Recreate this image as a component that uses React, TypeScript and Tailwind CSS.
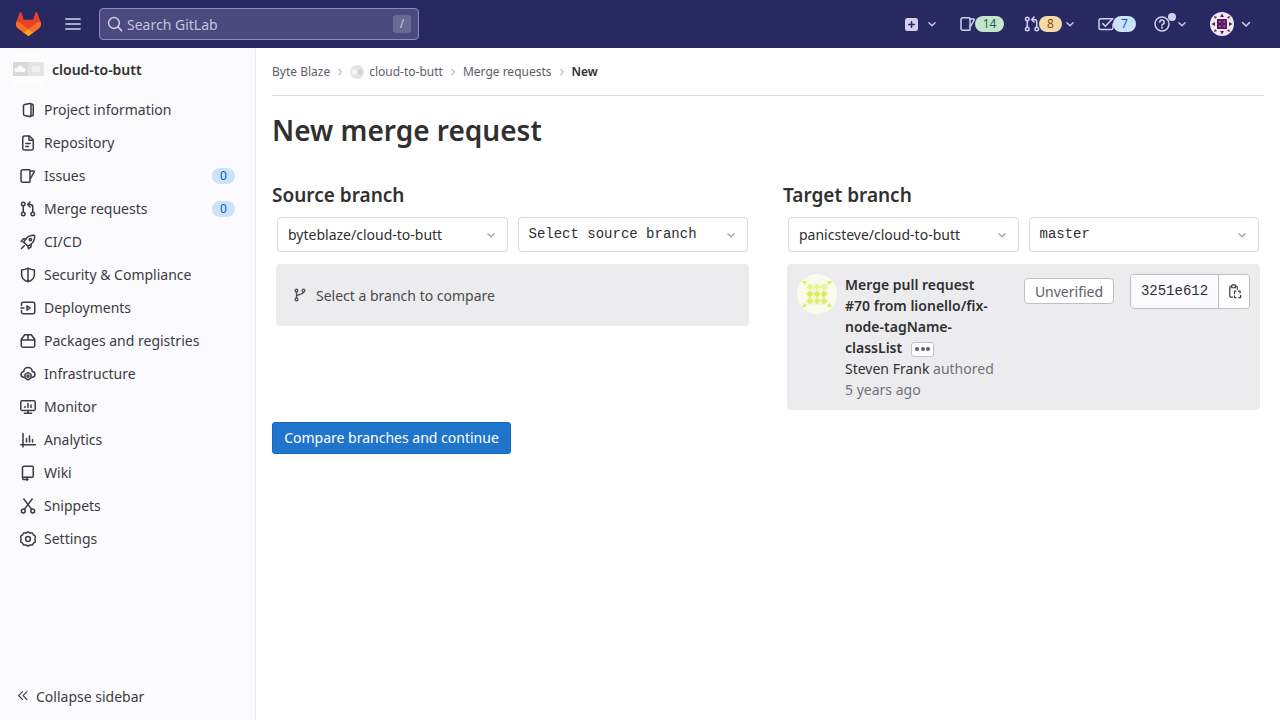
import React from "react";

const S = ({ children, className = "w-4 h-4", sw = 1.5 }: { children: React.ReactNode; className?: string; sw?: number }) => (
  <svg viewBox="0 0 16 16" fill="none" stroke="currentColor" strokeWidth={sw} strokeLinecap="round" strokeLinejoin="round" className={`shrink-0 ${className}`}>
    {children}
  </svg>
);

const Chevron = ({ className = "w-4 h-4" }: { className?: string }) => (
  <S className={className}><path d="M4.5 6.5 8 10l3.5-3.5" /></S>
);

const icons: Record<string, React.ReactNode> = {
  project: <><path d="M9.7 1.4 4.6 2.6A1.4 1.4 0 0 0 3.5 4v8a1.4 1.4 0 0 0 1.1 1.4l5.1 1.2A1 1 0 0 0 11 13.6V2.4a1 1 0 0 0-1.3-1Z" /><path d="M10.5 2H11.5A1.75 1.75 0 0 1 13.25 3.75v8.5A1.75 1.75 0 0 1 11.5 14h-1" /></>,
  doc: <><path d="M2.75 2.75A1.75 1.75 0 0 1 4.5 1H9.5L13.25 4.75v8.5A1.75 1.75 0 0 1 11.5 15h-7a1.75 1.75 0 0 1-1.75-1.75Z" /><path d="M9 1.25V5.25H13" /><path d="M5.8 8.5h4.4M5.8 11.5h2.6" /></>,
  issues: <><path d="M2.75 1.75h6.5a.75.75 0 0 1 .75.75v11a.75.75 0 0 1-.75.75h-6.5A1.75 1.75 0 0 1 1 12.5v-9A1.75 1.75 0 0 1 2.75 1.75Z" /><path d="M10.5 3h3.2a.6.6 0 0 1 .5.9L10.5 10.5" /></>,
  mr: <><circle cx="3.25" cy="3" r="1.75" /><circle cx="3.25" cy="13" r="1.75" /><circle cx="12.75" cy="13" r="1.75" /><path d="M3.25 4.75v6.5" /><path d="M12.75 11.25V6A2.5 2.5 0 0 0 10.25 3.5H8" /><path d="M10 1 7.75 3.5 10 6" /></>,
  rocket: <><path d="M14.6 1.4c-3.6-.3-6.6.9-8.6 3.4L3.7 8.1l4.2 4.2 3.3-2.3c2.5-2 3.7-5 3.4-8.6Z" /><path d="M6 4.8H3.4L1.2 7.4l2.5.7M11.2 10v2.6l-2.6 2.2-.7-2.5" /><circle cx="10.4" cy="5.6" r="1.2" /><path d="M4.3 11.7 1.5 14.5" /></>,
  shield: <path d="M8 1.2c2 1.2 4.2 1.7 6.4 1.8v4.8c0 3.2-2.5 5.8-6.4 7-3.9-1.2-6.4-3.8-6.4-7V3C3.8 2.9 6 2.4 8 1.2ZM8 1.5v13" />,
  deploy: <><path d="M1.5 5.5V4a1.75 1.75 0 0 1 1.75-1.75H13A1.75 1.75 0 0 1 14.75 4v8A1.75 1.75 0 0 1 13 13.75H3.25A1.75 1.75 0 0 1 1.5 12v-1.5" /><path d="M7 5.8 10.3 8 7 10.2Z" /><path d="M1 8h3" /></>,
  pkg: <><path d="M1.25 6.5 4.7 1.75h6.6l3.45 4.75v6A1.75 1.75 0 0 1 13 14.25H3a1.75 1.75 0 0 1-1.75-1.75Z" /><path d="M1.5 7h13M8 1.75V7" /></>,
  cloud: <><path d="M3.8 11.2A2.9 2.9 0 0 1 1 8.4 2.8 2.8 0 0 1 3.8 5.6 4.2 4.2 0 0 1 12.2 5.6 2.8 2.8 0 0 1 15 8.4a2.9 2.9 0 0 1-2.8 2.8" /><path d="M8 6.7 11 8.4v3.6L8 13.8 5 12V8.4Z" /><circle cx="8" cy="10.2" r="1" /></>,
  monitor: <><rect x=".75" y="1.75" width="14.5" height="9.75" rx="1.4" /><path d="M8 11.5V14.25M4.5 14.25h7" /><path d="M5 8.5v-1M8 8.5v-4M11 8.5V6" /></>,
  chart: <><path d="M3 1.5v13.5M.8 12.75h14.7" /><path d="M6.5 10V6.5M9.5 10V4M12.5 10V7.5" /></>,
  book: <><path d="M2.5 12.5V3A1.75 1.75 0 0 1 4.25 1.25h8c.5 0 1 .4 1 1v9c0 .5-.5 1-1 1H4A1.5 1.5 0 0 0 2.5 13.5c0 .7.6 1 1.2 1H8" /><path d="M7 12.25v3" /></>,
  snippet: <><circle cx="3.3" cy="13" r="1.9" /><circle cx="12.7" cy="13" r="1.9" /><path d="M3.8 1 11.7 11.4M12.2 1 4.3 11.4" /></>,
  gear: <><circle cx="8" cy="8" r="2.4" /><path d="M8 .9 10 2l2.3-.1 1.2 2 1.9 1.2L15 8l.4 2.9-1.9 1.2-1.2 2L10 14l-2 1.1L6 14l-2.3.1-1.2-2L.6 10.9 1 8 .6 5.1l1.9-1.2 1.2-2L6 2Z" /></>,
  todo: <><path d="M15 2.75H2.75A1.75 1.75 0 0 0 1 4.5v7.25A1.75 1.75 0 0 0 2.75 13.5h10.5A1.75 1.75 0 0 0 15 11.75V8" /><path d="m4.8 7.6 2.6 2.6L14.2 3" /></>,
  help: <><circle cx="8" cy="8" r="7" /><path d="M5.8 6.3A2.2 2.2 0 1 1 8.9 8.2c-.6.3-.9.7-.9 1.3" /><circle cx="8" cy="11.7" r=".4" /></>,
  branch: <><circle cx="4" cy="3" r="1.6" /><circle cx="4" cy="13" r="1.6" /><circle cx="12" cy="3" r="1.6" /><path d="M4 4.6v6.8M12 4.6c0 3.2-8 2.2-8 5.4" /></>,
};

const nav: [string, string, string?][] = [
  ["project", "Project information"],
  ["doc", "Repository"],
  ["issues", "Issues", "0"],
  ["mr", "Merge requests", "0"],
  ["rocket", "CI/CD"],
  ["shield", "Security & Compliance"],
  ["deploy", "Deployments"],
  ["pkg", "Packages and registries"],
  ["cloud", "Infrastructure"],
  ["monitor", "Monitor"],
  ["chart", "Analytics"],
  ["book", "Wiki"],
  ["snippet", "Snippets"],
  ["gear", "Settings"],
];

const Logo = () => (
  <svg viewBox="0 0 25 24" className="w-[25px] h-[24px] shrink-0">
    <path fill="#E24329" d="m24.507 9.5-.034-.09L21.082.562a.896.896 0 0 0-1.694.091l-2.29 7.01H7.825L5.535.653a.898.898 0 0 0-1.694-.09L.451 9.411.416 9.5a6.297 6.297 0 0 0 2.09 7.278l.012.01.03.022 5.16 3.867 2.56 1.935 1.554 1.176a1.051 1.051 0 0 0 1.268 0l1.555-1.176 2.56-1.935 5.197-3.89.014-.01A6.297 6.297 0 0 0 24.507 9.5Z" />
    <path fill="#FC6D26" d="m24.507 9.5-.034-.09a11.44 11.44 0 0 0-4.56 2.051l-7.447 5.632 4.742 3.584 5.197-3.89.014-.01A6.297 6.297 0 0 0 24.507 9.5Z" />
    <path fill="#FCA326" d="m7.707 20.677 2.56 1.935 1.555 1.176a1.051 1.051 0 0 0 1.268 0l1.555-1.176 2.56-1.935-4.743-3.584-4.755 3.584Z" />
    <path fill="#FC6D26" d="M5.01 11.461a11.43 11.43 0 0 0-4.56-2.05L.416 9.5a6.297 6.297 0 0 0 2.09 7.278l.012.01.03.022 5.16 3.867 4.745-3.584-7.444-5.632Z" />
  </svg>
);

const ProjectThumb = ({ className }: { className: string }) => (
  <svg viewBox="0 0 32 32" className={className}>
    <rect width="32" height="32" rx="4" fill="#fdfdfe" />
    <rect x="1" y="9" width="31" height="14" rx="1" fill="#e6e6e6" />
    <rect x="1" y="9" width="15" height="14" fill="#d8d8d8" />
    <path d="M4 19a2 2 0 0 1 1-4 3.5 3.5 0 0 1 6.5 0 2 2 0 0 1 .5 4Z" fill="#fafafa" />
    <rect x="19" y="12" width="10" height="8" rx="1" fill="#f0f0f0" stroke="#dcdcdc" />
  </svg>
);

const UserAvatar = () => (
  <svg viewBox="0 0 24 24" className="w-6 h-6 shrink-0">
    <circle cx="12" cy="12" r="12" fill="#f1e9ef" />
    <g fill="#5d1a66">
      <rect x="7" y="7" width="10" height="10" />
      <path d="M12 1.5 14 5h-4ZM12 22.5 10 19h4ZM1.5 12 5 10v4ZM22.5 12 19 14v-4ZM4 4l3 1-2 2ZM20 4l-1 3-2-2ZM4 20l1-3 2 2ZM20 20l-3-1 2-2Z" />
    </g>
    <g fill="#a879ab">
      <rect x="9" y="9" width="1.6" height="1.6" />
      <rect x="13.4" y="9" width="1.6" height="1.6" />
      <rect x="9" y="13.4" width="1.6" height="1.6" />
      <rect x="13.4" y="13.4" width="1.6" height="1.6" />
    </g>
  </svg>
);

const Identicon = () => (
  <svg viewBox="0 0 40 40" className="w-10 h-10 shrink-0">
    <circle cx="20" cy="20" r="20" fill="#f9fbec" />
    <rect x="9" y="9" width="22" height="22" fill="#f4f9d8" />
    <g fill="#dcec5c">
      <path d="M13 9.5l3.5 3.5-3.5 3.5L9.5 13ZM20 9.5l3.5 3.5-3.5 3.5-3.5-3.5ZM27 9.5l3.5 3.5-3.5 3.5-3.5-3.5Z" opacity=".55" />
      <path d="M13 16.5l3.5 3.5-3.5 3.5L9.5 20ZM20 16.5l3.5 3.5-3.5 3.5-3.5-3.5ZM27 16.5l3.5 3.5-3.5 3.5-3.5-3.5Z" />
      <path d="M13 23.5l3.5 3.5-3.5 3.5L9.5 27ZM20 23.5l3.5 3.5-3.5 3.5-3.5-3.5ZM27 23.5l3.5 3.5-3.5 3.5-3.5-3.5Z" opacity=".85" />
      <path d="M5 7h5L7.5 11ZM35 7h-5l2.5 4ZM5 33h5l-2.5-4ZM35 33h-5l2.5-4Z" />
    </g>
  </svg>
);

const Select = ({ children, mono = false, w }: { children: React.ReactNode; mono?: boolean; w: string }) => (
  <div className={`${w} h-[35px] flex items-center justify-between bg-white rounded border border-[#dcdcde] pr-[9px] shadow-[0_0_1px_rgba(0,0,0,.08)] text-[#303030] ${mono ? "pl-[9.5px] font-['Liberation_Mono',monospace]" : "pl-[10px]"}`}>
    <span>{children}</span>
    <span className="text-[#a4a3a8]"><Chevron className="w-[14px] h-[14px]" /></span>
  </div>
);

const Crumb = ({ className }: { className: string }) => (
  <span className={`text-[#8a8a90] ${className}`}>
    <S className="w-[10px] h-[10px]"><path d="M6 3.5 10.5 8 6 12.5" /></S>
  </span>
);

export default function App() {
  return (
    <div className="h-[720px] w-[1280px] overflow-hidden flex flex-col bg-white font-['Noto_Sans',sans-serif] text-[14px] text-[#303030]">
      <header className="h-12 shrink-0 bg-[#292961] flex items-center text-[#d1d0f0]">
        <div className="ml-4 mr-[24px]"><Logo /></div>
        <svg viewBox="0 0 16 12" className="w-4 h-3 shrink-0 mr-[18px]" fill="none" stroke="#d1d0f0" strokeWidth="1.6" strokeLinecap="round">
          <path d="M.8 1h14.4M.8 6h14.4M.8 11h14.4" />
        </svg>
        <div className="w-[320px] h-8 rounded border border-[#8c8cc0] bg-[#4a4a7e] flex items-center pl-[7px] pr-[7px]">
          <svg viewBox="0 0 16 16" className="w-4 h-4 shrink-0 mr-[4px]" fill="none" stroke="#d1d0f0" strokeWidth="1.5" strokeLinecap="round"><circle cx="7" cy="7" r="5.4" /><path d="m11 11 3.6 3.6" /></svg>
          <span className="text-[#c3c3df] text-[14px]">Search GitLab</span>
          <span className="ml-auto w-[18px] h-[18px] rounded-[3px] bg-[#6a6a97] text-[#c9c9e0] text-[12px] flex items-center justify-center">/</span>
        </div>
        <div className="ml-auto flex items-center">
          <svg viewBox="0 0 14 14" className="w-[13px] h-[13px] shrink-0 mr-[7px]"><rect width="14" height="14" rx="2.5" fill="#d1d0f0" /><path d="M7 4v6M4 7h6" stroke="#292961" strokeWidth="1.7" strokeLinecap="round" /></svg>
          <Chevron className="w-[14px] h-[14px] mr-[21px]" />
          <S className="w-4 h-4 -mr-[1px]">{icons.issues}</S>
          <span className="h-4 w-[29px] rounded-full bg-[#c3e6cd] text-[#24663b] text-[12px] flex items-center justify-center">14</span>
          <span className="w-[20px]" />
          <S className="w-4 h-4 -mr-[1px]">{icons.mr}</S>
          <span className="h-4 w-[23px] rounded-full bg-[#f5d9a8] text-[#8f4700] text-[12px] flex items-center justify-center">8</span>
          <Chevron className="w-[14px] h-[14px] ml-[1px] mr-[21px]" />
          <S className="w-4 h-4 -mr-[1px]">{icons.todo}</S>
          <span className="h-4 w-[23px] rounded-full bg-[#cbe2f9] text-[#0b5cad] text-[12px] flex items-center justify-center">7</span>
          <span className="w-[18px]" />
          <span className="relative flex mr-[5px]">
            <S className="w-4 h-4">{icons.help}</S>
            <span className="absolute -top-[3px] left-[14px] w-2 h-2 rounded-full bg-[#d1d0f0]" />
          </span>
          <Chevron className="w-[14px] h-[14px] mr-[21px]" />
          <UserAvatar />
          <Chevron className="w-[16px] h-[16px] ml-[4px] mr-[26px]" />
        </div>
      </header>
      <div className="flex flex-1 min-h-0">
        <aside className="w-[256px] shrink-0 bg-[#fbfafd] border-r border-[#e9e9e9] flex flex-col">
          <div className="h-[44px] flex items-center pl-3 pb-[2px]">
            <ProjectThumb className="w-8 h-8 shrink-0 mr-2" />
            <span className="font-semibold text-[#303030]">cloud-to-butt</span>
          </div>
          <nav className="mt-[1px] flex flex-col">
            {nav.map(([ic, label, badge]) => (
              <div key={label} className="h-[33px] flex items-center pl-5 pr-5 text-[#3d3b42]">
                <S className="w-4 h-4 mr-2">{icons[ic]}</S>
                <span>{label}</span>
                {badge && (
                  <span className="ml-auto w-[23px] h-4 rounded-full bg-[#cbe2f9] text-[#0b5cad] text-[12px] flex items-center justify-center">{badge}</span>
                )}
              </div>
            ))}
          </nav>
          <div className="mt-auto h-12 flex items-center pl-4 text-[#3d3b42]">
            <S className="w-[14px] h-[14px] mr-[6px]" sw={1.3}><path d="M7.5 3 3 7.5 7.5 12M12.5 3 8 7.5l4.5 4.5" /></S>
            <span>Collapse sidebar</span>
          </div>
        </aside>
        <main className="flex-1 min-w-0 px-4">
          <div className="h-[48px] border-b border-[#dcdcde] flex items-center text-[12px] text-[#5e5e66] pt-[1px]">
            <span>Byte Blaze</span>
            <Crumb className="mx-[5px]" />
            <ProjectThumbSmall />
            <span>cloud-to-butt</span>
            <Crumb className="ml-[5px] mr-[5px]" />
            <span>Merge requests</span>
            <Crumb className="ml-[5px] mr-[5px]" />
            <span className="font-semibold text-[#303030]">New</span>
          </div>
          <h1 className="mt-[14px] text-[28px] leading-[40px] font-semibold text-[#303030]">New merge request</h1>
          <div className="mt-[31px] flex">
            <section className="w-[511px] shrink-0">
              <h2 className="text-[19px] leading-[28px] font-semibold">Source branch</h2>
              <div className="mt-[8px] pl-[5px] flex gap-[10px]">
                <Select w="w-[231px]">byteblaze/cloud-to-butt</Select>
                <Select w="w-[230px]" mono>Select source branch</Select>
              </div>
              <div className="mt-[12px] ml-1 w-[473px] h-[62px] rounded bg-[#ececef] flex items-center pl-[17px] text-[#4a4a4a]">
                <S className="w-[14px] h-[14px] mr-[9px]" sw={1.4}>{icons.branch}</S>
                <span>Select a branch to compare</span>
              </div>
            </section>
            <section className="flex-1">
              <h2 className="text-[19px] leading-[28px] font-semibold">Target branch</h2>
              <div className="mt-[8px] pl-[5px] flex gap-[10px]">
                <Select w="w-[231px]">panicsteve/cloud-to-butt</Select>
                <Select w="w-[230px]" mono>master</Select>
              </div>
              <div className="mt-[12px] ml-1 w-[473px] h-[146px] rounded bg-[#ececef] flex items-start pt-[10px] pl-[10px]">
                <Identicon />
                <div className="ml-2 w-[150px] leading-[21px] mr-[29px]">
                  <div className="font-semibold">
                    Merge pull request #70 from lionello/fix-node-tagName-classList
                    <span className="ml-[9px] inline-flex align-middle w-[23px] h-[15px] rounded-[3px] bg-white border border-[#c4c4c8] items-center justify-center gap-[1.5px]">
                      <i className="w-[4px] h-[4px] rounded-full bg-[#5e5e66]" />
                      <i className="w-[4px] h-[4px] rounded-full bg-[#5e5e66]" />
                      <i className="w-[4px] h-[4px] rounded-full bg-[#5e5e66]" />
                    </span>
                  </div>
                  <div className="text-[#303030]">Steven Frank <span className="text-[#737278]">authored</span></div>
                  <div className="text-[#737278]">5 years ago</div>
                </div>
                <span className="mt-[4px] h-[26px] w-[90px] rounded border border-[#bfbfc3] bg-white text-[#5e5e66] flex items-center justify-center">Unverified</span>
                <div className="ml-[16px] h-[35px] w-[120px] rounded border border-[#bfbfc3] flex overflow-hidden">
                  <span className="w-[88px] bg-[#fbfafd] border-r border-[#bfbfc3] flex items-center justify-center font-['Liberation_Mono',monospace]">3251e612</span>
                  <span className="flex-1 bg-white flex items-center justify-center text-[#3d3b42]">
                    <S className="w-[15px] h-[15px]" sw={1.3}><path d="M4.5 2.5H4A1.2 1.2 0 0 0 3 3.7v9.1A1.2 1.2 0 0 0 4 14h2" /><path d="M9.5 2.5h.5c.5 0 1 .5 1 1.2V5.5" /><rect x="5" y="1" width="4" height="3" rx=".6" /><path d="M8 7.5h1.5M12 7.5h2v1.8M14.5 12v2.5h-2M9.5 14.5H8v-1.8M8 10.2V7.5" /></S>
                  </span>
                </div>
              </div>
            </section>
          </div>
          <button className="mt-[12px] h-8 w-[239px] rounded-[3px] bg-[#1f75cb] border border-[#1068bf] text-white flex items-center justify-center pb-[2px]">Compare branches and continue</button>
        </main>
      </div>
    </div>
  );
}

function ProjectThumbSmall() {
  return (
    <svg viewBox="0 0 16 16" className="w-[14px] h-[14px] shrink-0 mr-[5px]">
      <circle cx="8" cy="8" r="8" fill="#e4e4e4" />
      <rect x="2" y="5" width="6" height="6" fill="#f4f4f4" />
      <rect x="9" y="5" width="5" height="6" fill="#d0d0d0" />
    </svg>
  );
}
